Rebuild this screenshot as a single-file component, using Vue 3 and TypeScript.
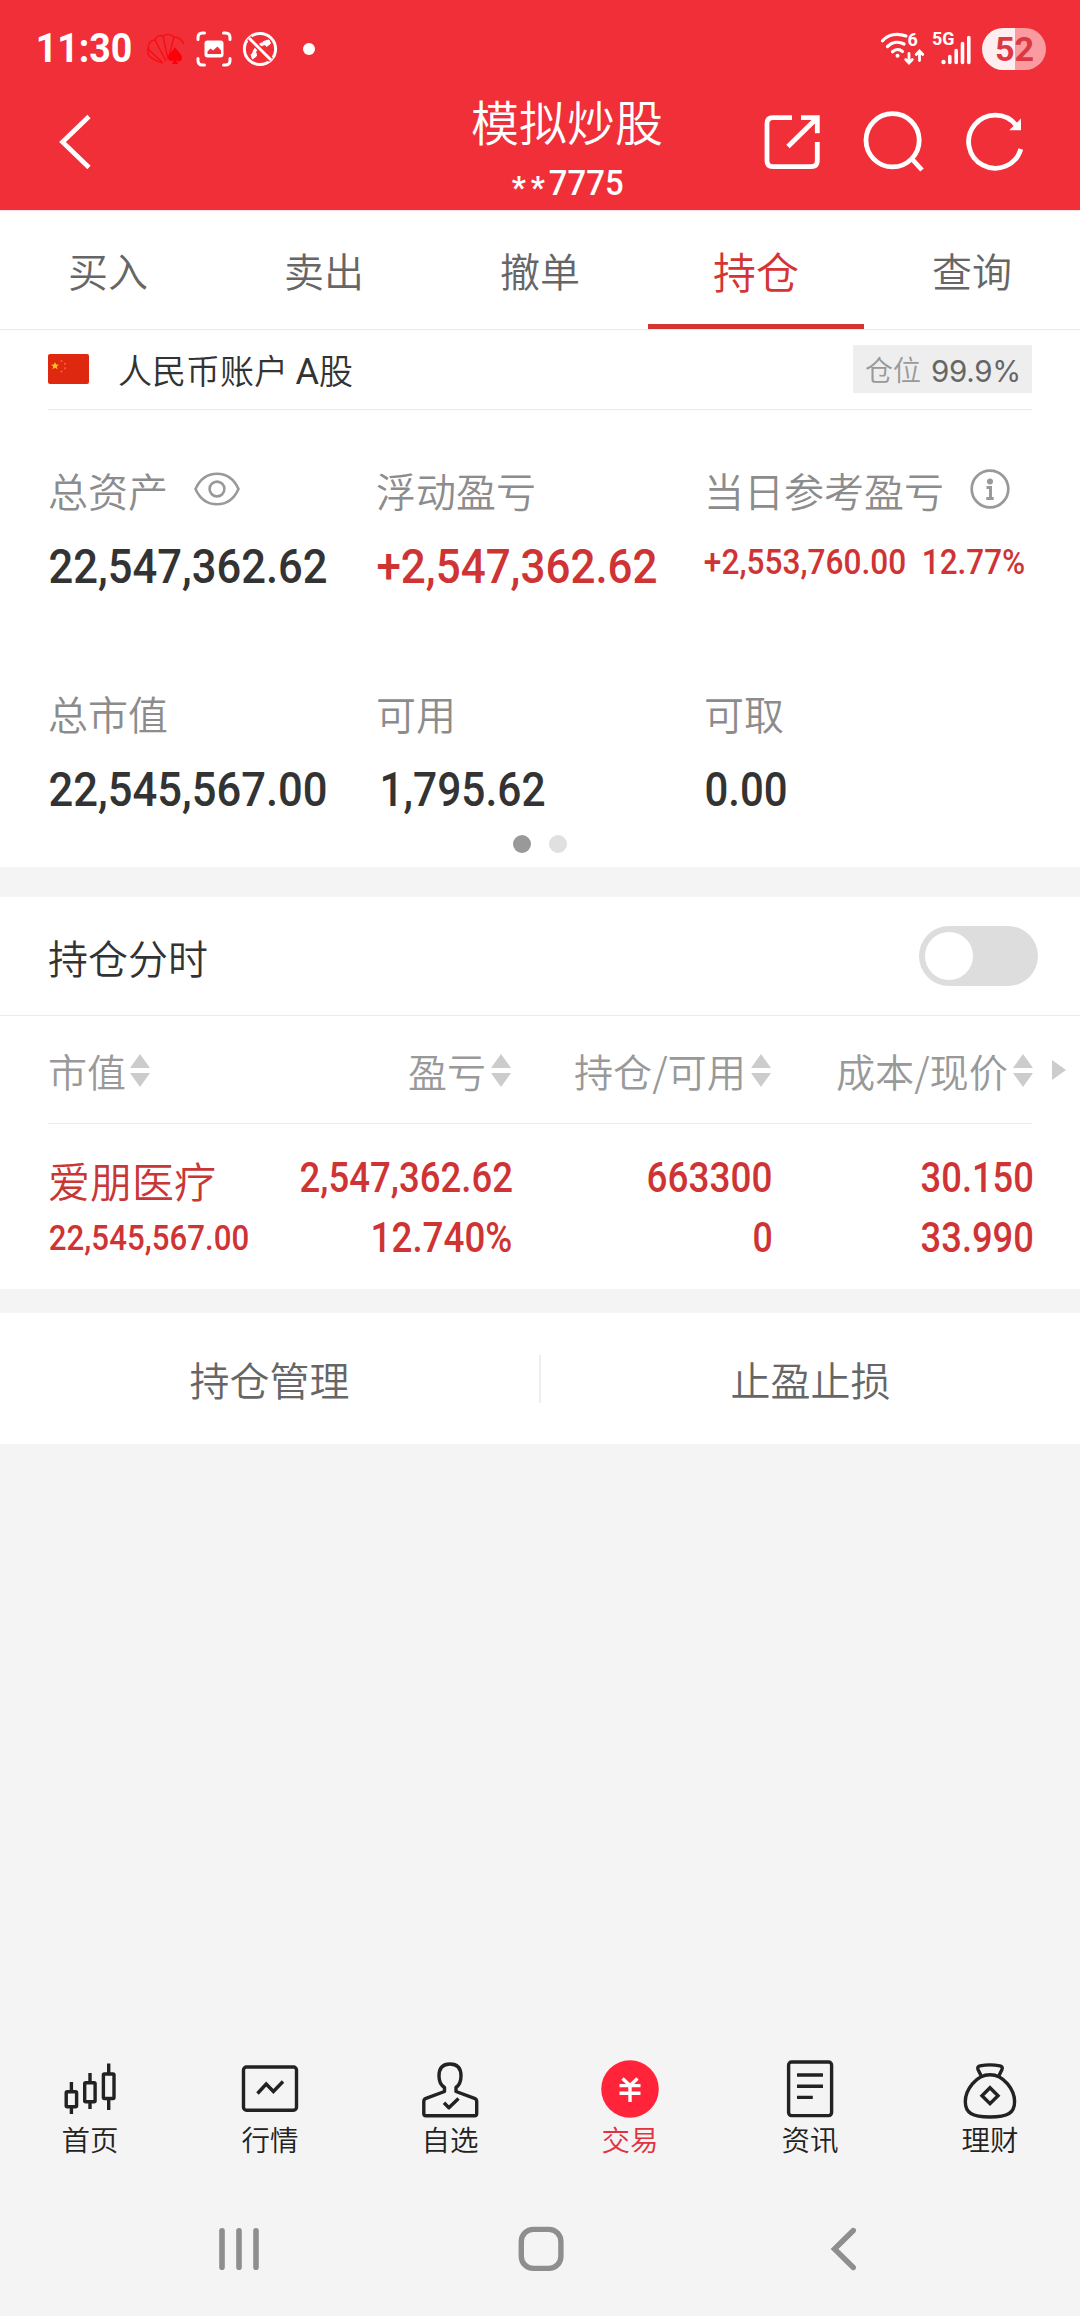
<script setup lang="ts">
import { h } from 'vue'

interface NumProps {
  text: string
  w: number
  cap: number
  weight?: number
  fill?: string
}

const RED = '#cf3435'
const DARK = '#333333'

/* Condensed figure text: set to a given width and digit height. */
const Num = (p: NumProps) => {
  const size = p.cap / 0.711
  const pad = size * 0.033
  return h(
    'svg',
    { width: p.w, height: p.cap, style: 'overflow:visible;display:block;flex:none' },
    [
      h(
        'text',
        {
          x: -pad,
          y: p.cap,
          'font-family': 'Roboto, "Liberation Sans", sans-serif',
          'font-size': size,
          'font-weight': p.weight ?? 500,
          fill: p.fill ?? DARK,
          textLength: p.w + pad * 2,
          lengthAdjust: 'spacingAndGlyphs',
        },
        p.text,
      ),
    ],
  )
}
Num.props = ['text', 'w', 'cap', 'weight', 'fill']

const tabs = ['买入', '卖出', '撤单', '持仓', '查询']
const activeTab = '持仓'

const columns = [
  { name: '市值', cls: 'c1' },
  { name: '盈亏', cls: 'c2' },
  { name: '持仓/可用', cls: 'c3' },
  { name: '成本/现价', cls: 'c4' },
]
</script>

<template>
  <div class="screen">
    <header class="top">
      <div class="status">
        <Num text="11:30" :w="94" :cap="28.7" :weight="700" fill="#fff" class="clock" />
        <svg class="fan" width="40" height="34" viewBox="146 33 40 34" fill="none" stroke="#fb0d12" stroke-width="1.500">
          <path d="M163 64C155 62 149 58 148 55L148 50L163 64M149 50C147 45 151 41 155 41L166 62M155 41C156 37 160 36 163 37L168 60M163 37C166 35 171 35 174 38L169 57M174 38C179 38 182 41 184 45" />
          <path d="M175 48C178 53 182 55 182 59C182 63 178 63 176 61L178 65H172L174 61C171 63 168 62 168 58C169 54 173 52 175 48Z" fill="#fb0008" stroke="none" />
        </svg>
        <svg class="shot" width="36" height="36" viewBox="0 0 36 36" fill="none" stroke="#fff" stroke-width="3" stroke-linecap="round">
          <path d="M2 8.500V6.500Q2 2 6.500 2H8.500M27.500 2H29.500Q34 2 34 6.500V8.500M34 27.500V29.500Q34 34 29.500 34H27.500M8.500 34H6.500Q2 34 2 29.500V27.500" />
          <rect x="8.500" y="9.500" width="19" height="17" rx="3" fill="#fff" stroke="none" />
          <path d="M11.500 23L11.500 20.500L14.500 17.500L17 19.500L21.500 15.500L25 19.500V23Z" fill="#f12f38" stroke="none" />
        </svg>
        <svg class="nocall" width="36" height="36" viewBox="-18 -18 36 36" fill="none" stroke="#fff">
          <circle r="15.600" stroke-width="3" />
          <path d="M-6.500 7C-6 0 -1 -5.500 8 -6" stroke-width="3.400" />
          <path d="M-9 5.500L-4 3.500L-3.500 7L-7.500 10ZM3.500 -7.500L9 -9L10.500 -5.500L6.500 -2.500Z" fill="#fff" stroke="#fff" stroke-width="1" stroke-linejoin="round" />
          <path d="M-11 -11L11 11" stroke="#f12f38" stroke-width="5.600" />
          <path d="M-11 -11L11 11" stroke-width="3" />
        </svg>
        <i class="notch"></i>
        <svg class="radio" width="96" height="40" viewBox="878 30 96 40" fill="none" stroke="#fff" stroke-width="3.200" stroke-linecap="round">
          <path d="M882.500 41.800C888 35.500 897 33.500 906 37M887.500 47.500C892 43 898.500 42 904 45M892.500 52.700C895.500 50 899.500 50 902.500 52.500" />
          <circle cx="897.500" cy="56.700" r="2" fill="#fff" stroke="none" />
          <path d="M909 54.500V63.500M905.700 60.500L909 64L912.300 60.500M919.500 61.500V52.500M916.200 55.500L919.500 52L922.800 55.500" stroke-width="2.800" />
          <text x="907.500" y="47.300" font-family="Roboto, sans-serif" font-size="18" font-weight="700" fill="#fff" stroke="none">6</text>
          <text x="932" y="45.700" font-family="Roboto, sans-serif" font-size="18" font-weight="700" fill="#fff" stroke="none" textLength="22.500" lengthAdjust="spacingAndGlyphs">5G</text>
          <circle cx="943.500" cy="63" r="2.200" fill="#fff" stroke="none" />
          <path d="M949.800 57.500V63.500M956.200 51.500V63.500M962.500 44.500V63.500M968.800 38.500V63.500" stroke-width="3.600" />
        </svg>
        <div class="battery">
          <Num text="52" :w="37" :cap="24" :weight="700" fill="#dc3844" />
        </div>
      </div>
      <div class="bar">
        <svg class="back" width="40" height="64" viewBox="55 110 40 64" fill="none" stroke="#fff" stroke-width="4.600">
          <path d="M89 116.500L62.500 142L89 167.500" />
        </svg>
        <div class="title">
          <h1>模拟炒股</h1>
          <div class="acct-no"><span class="mask">**</span><Num text="7775" :w="72.500" :cap="25.500" fill="#fff" /></div>
        </div>
        <svg class="actions" width="270" height="66" viewBox="760 108 270 66" fill="none" stroke="#fff" stroke-width="4.800">
          <path d="M792 117.700H773Q767 117.700 767 123.700V160.700Q767 166.700 773 166.700H811.300Q817.300 166.700 817.300 160.700V142" />
          <path d="M801 117.700H817.300V133.300M788 146.500L816 119" />
          <circle cx="892.600" cy="140.300" r="26.600" />
          <path d="M911.500 158.500L922 170" />
          <path d="M1020.800 149A26.600 26.600 0 1 1 1016 125" />
          <path d="M1021 118.500V130.200H1009.200Z" fill="#fff" stroke="none" />
        </svg>
      </div>
    </header>

    <nav class="tabs">
      <div v-for="t in tabs" :key="t" class="tab" :class="{ on: t === activeTab }">{{ t }}</div>
    </nav>

    <section class="account">
      <svg width="41" height="30" viewBox="0 0 41 30">
        <rect width="41" height="30" rx="2" fill="#de2910" />
        <path d="M7 8L8.100 10.600L10.900 10.800L8.800 12.600L9.500 15.300L7 13.800L4.500 15.300L5.200 12.600L3.100 10.800L5.900 10.600Z" fill="#ffc21a" />
        <g fill="#f0642a">
          <circle cx="13.500" cy="7" r="1.100" /><circle cx="17" cy="9.800" r="1.100" />
          <circle cx="17" cy="14.300" r="1.100" /><circle cx="13.500" cy="17.500" r="1.100" />
        </g>
      </svg>
      <span class="acct-name">人民币账户 <b>A</b>股</span>
      <div class="pos"><span>仓位</span><span class="pct">99.9%</span></div>
    </section>

    <section class="stats">
      <div class="grid">
        <div>
          <div class="label">总资产
            <svg class="eye" width="46" height="34" viewBox="-23 -17 46 34" fill="none" stroke="#999" stroke-width="2.600">
              <path d="M-21.500 0C-17 -10 -9 -15.300 0 -15.300S17 -10 21.500 0C17 10 9 15.300 0 15.300S-17 10 -21.500 0Z" />
              <circle r="7.400" />
            </svg>
          </div>
          <Num text="22,547,362.62" :w="276" :cap="34" class="v" />
        </div>
        <div>
          <div class="label">浮动盈亏</div>
          <Num text="+2,547,362.62" :w="278" :cap="34" :fill="RED" class="v" />
        </div>
        <div>
          <div class="label">当日参考盈亏
            <svg class="info" width="40" height="40" viewBox="-20 -20 40 40" fill="none" stroke="#999" stroke-width="2.700">
              <circle r="18.300" />
              <circle cy="-7.600" r="3" fill="#999" stroke="none" />
              <path d="M-3.500 -1.500H0.500V9M-3.700 9.500H3.700" stroke-width="3" />
            </svg>
          </div>
          <div class="pair">
            <Num text="+2,553,760.00" :w="200" :cap="25" :fill="RED" />
            <Num text="12.77%" :w="101" :cap="25" :fill="RED" />
          </div>
        </div>
        <div>
          <div class="label">总市值</div>
          <Num text="22,545,567.00" :w="276" :cap="34" class="v" />
        </div>
        <div>
          <div class="label">可用</div>
          <Num text="1,795.62" :w="163" :cap="34" class="v v1" />
        </div>
        <div>
          <div class="label">可取</div>
          <Num text="0.00" :w="80" :cap="34" class="v" />
        </div>
      </div>
      <div class="dots"><i></i><i></i></div>
    </section>

    <section class="card">
      <div class="switch-row">
        <span>持仓分时</span>
        <div class="switch"><i></i></div>
      </div>
      <div class="thead">
        <div v-for="c in columns" :key="c.name" :class="c.cls">
          <span>{{ c.name }}</span>
          <svg width="20" height="33" viewBox="0 0 20 33" fill="#ccc"><path d="M10 0L20 14H0ZM0 19H20L10 33Z" /></svg>
        </div>
        <svg class="more" width="14" height="20" viewBox="0 0 14 20" fill="#ccc"><path d="M0 0L14 10L0 20Z" /></svg>
      </div>
      <div class="holding">
        <div class="c1">
          <div class="stock">爱朋医疗</div>
          <Num text="22,545,567.00" :w="198" :cap="25" :fill="RED" />
        </div>
        <div class="c2 nums">
          <Num text="2,547,362.62" :w="210.500" :cap="30" :fill="RED" />
          <Num text="12.740%" :w="139" :cap="30" :fill="RED" />
        </div>
        <div class="c3 nums">
          <Num text="663300" :w="123" :cap="30" :fill="RED" />
          <Num text="0" :w="17.500" :cap="30" :fill="RED" />
        </div>
        <div class="c4 nums">
          <Num text="30.150" :w="110.500" :cap="30" :fill="RED" />
          <Num text="33.990" :w="110.500" :cap="30" :fill="RED" />
        </div>
      </div>
    </section>

    <section class="links">
      <div>持仓管理</div>
      <i></i>
      <div>止盈止损</div>
    </section>

    <nav class="bottom">
      <div>
        <svg width="64" height="64" viewBox="58 2057 64 64" fill="none" stroke="#222" stroke-width="3.400">
          <rect x="66.200" y="2091.700" width="10.400" height="15" rx="1" /><rect x="84.700" y="2082.700" width="10.400" height="19" rx="1" /><rect x="103.400" y="2074" width="10.600" height="24.500" rx="1" />
          <path d="M71.400 2082V2091M71.400 2107V2114M90 2073V2082M90 2102V2109M108.700 2063.500V2074M108.700 2099V2110" />
        </svg>
        <span>首页</span>
      </div>
      <div>
        <svg width="64" height="64" viewBox="238 2057 64 64" fill="none" stroke="#222" stroke-width="3.400">
          <rect x="243.500" y="2067" width="53" height="43.300" rx="3" />
          <path d="M257.500 2093.500L266.200 2084L273.400 2091.500L283 2081.500" />
        </svg>
        <span>行情</span>
      </div>
      <div>
        <svg width="64" height="64" viewBox="418 2057 64 64" fill="none" stroke="#222" stroke-width="3.400" stroke-linejoin="round">
          <path d="M444.500 2091.500V2087.500C440.500 2085 439 2081 439 2076C439 2068 443 2064 450 2064S461 2068 461 2076C461 2081 459.500 2085 456 2087.500V2091.500L474.500 2098.300Q476.700 2099.200 476.700 2101.500V2113.500Q476.700 2115.700 474.500 2115.700H426Q423.800 2115.700 423.800 2113.500V2101.500Q423.800 2099.200 426 2098.300Z" />
          <path d="M444 2102.700L448.900 2107.700L458.500 2098.500" />
        </svg>
        <span>自选</span>
      </div>
      <div class="on">
        <svg width="64" height="64" viewBox="598 2057 64 64" fill="none" stroke="#fff" stroke-width="3.400">
          <circle cx="630" cy="2089" r="28.800" fill="#ff2439" stroke="none" />
          <path d="M622.500 2078.500L630 2085.500L637.500 2078.500M619.500 2085.600H640.500M619.500 2093.200H640.500M630 2085V2102" />
        </svg>
        <span>交易</span>
      </div>
      <div>
        <svg width="64" height="64" viewBox="778 2057 64 64" fill="none" stroke="#222" stroke-width="3.400">
          <rect x="788.600" y="2062" width="43" height="53.600" rx="3" />
          <path d="M797 2075H823M797 2086.300H823M797 2097.400H812.800" />
        </svg>
        <span>资讯</span>
      </div>
      <div>
        <svg width="64" height="64" viewBox="958 2057 64 64" fill="none" stroke="#222" stroke-width="3.400" stroke-linejoin="round">
          <path d="M990 2074.700C976 2074.700 965.300 2090 965.300 2101.500C965.300 2113 972 2117 990 2117S1014.600 2113 1014.600 2101.500C1014.600 2090 1004 2074.700 990 2074.700Z" />
          <path d="M981 2075.500L978 2069.500Q977 2066.500 980 2065.800Q990 2064 1000 2065.800Q1003 2066.500 1002 2069.500L999 2075.500" />
          <path d="M990 2087.700L998 2095.700L990 2103.700L982 2095.700Z" stroke-linejoin="miter" />
        </svg>
        <span>理财</span>
      </div>
    </nav>

    <div class="sysnav">
      <svg width="46" height="46" viewBox="216 2226 46 46" stroke="#8e8e8e" stroke-width="5.600" stroke-linecap="round"><path d="M222 2230.700V2267.300M239 2230.700V2267.300M256 2230.700V2267.300" /></svg>
      <svg width="46" height="46" viewBox="518 2226 46 46" fill="none" stroke="#8e8e8e" stroke-width="5.400"><rect x="521.300" y="2229.400" width="39.600" height="39" rx="12" /></svg>
      <svg width="46" height="46" viewBox="820 2226 46 46" fill="none" stroke="#8e8e8e" stroke-width="5.400" stroke-linecap="round"><path d="M853.300 2230.500L834.500 2249L853.300 2267.500" /></svg>
    </div>
  </div>
</template>

<style>
body {
  margin: 0;
  background: #f4f4f4;
}
</style>

<style scoped>
.screen {
  width: 1080px;
  height: 2316px;
  display: flex;
  flex-direction: column;
  background: #f4f4f4;
  font-family: 'Noto Sans CJK SC', sans-serif;
  font-weight: 350;
  font-size: 40px;
  color: #333;
  overflow: hidden;
}
.screen svg {
  flex: none;
  display: block;
}
.top {
  height: 210px;
  background: #f12f38;
  color: #fff;
  border-bottom: 1px solid #ffe3e6;
}
.status {
  height: 97px;
  display: flex;
  align-items: center;
  padding: 0 34px 0 37px;
  box-sizing: border-box;
}
.clock {
  margin-top: -2px;
}
.fan {
  margin-left: 15px;
}
.shot {
  margin-left: 10px;
}
.nocall {
  margin-left: 10px;
}
.notch {
  width: 12px;
  height: 12px;
  border-radius: 50%;
  background: #fff;
  margin-left: 25px;
}
.radio {
  margin-left: auto;
}
.battery {
  width: 64px;
  height: 42px;
  margin-left: 8px;
  border-radius: 21px;
  background: linear-gradient(90deg, #feeef0 33px, #f99b9f 33px);
  display: flex;
  align-items: center;
  justify-content: center;
}
.bar {
  height: 113px;
  display: flex;
  align-items: flex-start;
}
.back {
  margin: 13px 0 0 55px;
}
.title {
  width: 200px;
  margin-left: 372px;
  display: flex;
  flex-direction: column;
  align-items: center;
}
.title h1 {
  margin: -5px 0 13px;
  font-size: 48px;
  font-weight: inherit;
  line-height: 56px;
  white-space: nowrap;
}
.acct-no {
  display: flex;
  align-items: center;
  height: 42px;
  gap: 0;
}
.mask {
  font-family: Roboto, 'Liberation Sans', sans-serif;
  font-size: 31px;
  font-weight: 700;
  line-height: 40px;
  letter-spacing: 5px;
  padding-top: 11px;
}
.actions {
  margin: 11px 0 0 93px;
}
.tabs {
  height: 118px;
  display: flex;
  background: #fff;
  border-bottom: 1px solid #ebebeb;
}
.tab {
  flex: 1;
  box-sizing: border-box;
  height: 118px;
  line-height: 118px;
  text-align: center;
  color: #666;
}
.tab.on {
  font-size: 43px;
  color: #d43434;
  border-bottom: 5px solid #d43434;
}
.account {
  height: 80px;
  display: flex;
  align-items: center;
  background: #fff;
  padding: 0 48px 2px;
  position: relative;
  box-sizing: border-box;
}
.account::after,
.thead::after {
  content: '';
  position: absolute;
  left: 48px;
  right: 48px;
  bottom: 0;
  height: 1px;
  background: #ebebeb;
}
.acct-name {
  font-size: 34px;
  margin-left: 29px;
}
.acct-name b {
  font-weight: 400;
  font-family: Roboto, sans-serif;
  font-size: 36px;
}
.pos {
  margin-left: auto;
  width: 179px;
  height: 48px;
  box-sizing: border-box;
  padding: 0 11px 0 12px;
  display: flex;
  align-items: center;
  justify-content: space-between;
  background: #eee;
  font-size: 28px;
  line-height: 44px;
  color: #999;
  white-space: nowrap;
}
.pct {
  font-family: Inter, Roboto, sans-serif;
  font-weight: 400;
  font-size: 29.500px;
  letter-spacing: -0.300px;
  color: #666;
  padding-top: 3px;
}
.stats {
  background: #fff;
  height: 457px;
  box-sizing: border-box;
  padding: 56px 48px 0;
}
.grid {
  display: grid;
  grid-template-columns: repeat(3, 328px);
  grid-template-rows: 223px 146px;
}
.label {
  display: flex;
  align-items: center;
  height: 48px;
  line-height: 48px;
  color: #8c8c8c;
  margin-bottom: 35px;
  white-space: nowrap;
}
.eye {
  margin: -3px 0 0 26px;
}
.info {
  margin: -3px 0 0 26px;
}
.v {
  margin-left: 2px;
}
.v1 {
  margin-left: 5px;
}
.pair {
  display: flex;
  gap: 18px;
  margin-left: 1px;
}
.dots {
  display: flex;
  justify-content: center;
  gap: 18px;
}
.dots i {
  width: 18px;
  height: 18px;
  border-radius: 50%;
  background: #999;
}
.dots i + i {
  background: #e0e0e0;
}
.card {
  margin-top: 30px;
  height: 392px;
  background: #fff;
}
.switch-row {
  height: 118px;
  border-bottom: 1px solid #ebebeb;
  padding: 0 42px 0 48px;
  display: flex;
  align-items: center;
  justify-content: space-between;
}
.switch-row span {
  padding-top: 2px;
}
.switch {
  width: 119px;
  height: 60px;
  border-radius: 30px;
  background: #ddd;
  display: flex;
  align-items: center;
}
.switch i {
  width: 48px;
  height: 48px;
  margin-left: 6px;
  border-radius: 50%;
  background: #fff;
}
.thead {
  position: relative;
  height: 108px;
  display: flex;
  align-items: center;
  padding-left: 48px;
  font-size: 39px;
  color: #999;
}
.thead > div {
  display: flex;
  align-items: center;
  justify-content: flex-end;
  gap: 5px;
  white-space: nowrap;
}
.thead > .c1 {
  justify-content: flex-start;
  gap: 4px;
}
.thead > .c3,
.thead > .c4 {
  font-size: 39.200px;
}
.thead > .c4 svg {
  margin-right: -1px;
}
.more {
  margin-left: 20px;
}
.c1 {
  width: 202px;
}
.c2 {
  width: 261px;
}
.c3 {
  width: 260px;
}
.c4 {
  width: 261px;
}
.holding {
  display: flex;
  padding-left: 48px;
  color: #c93636;
}
.stock {
  font-size: 42px;
  line-height: 50px;
  margin: 31px 0 20px;
}
.stock + svg {
  margin-left: 2px;
}
.nums {
  display: flex;
  flex-direction: column;
  align-items: flex-end;
  gap: 30px;
  padding-top: 38px;
}
.links {
  margin-top: 24px;
  height: 131px;
  background: #fff;
  display: flex;
  align-items: center;
  color: #666;
}
.links div {
  flex: 1;
  text-align: center;
}
.links i {
  width: 2px;
  height: 48px;
  background: #eee;
}
.bottom {
  margin-top: auto;
  display: flex;
  height: 107px;
}
.bottom div {
  width: 180px;
  display: flex;
  flex-direction: column;
  align-items: center;
  font-size: 28.500px;
  line-height: 36px;
  color: #222;
}
.bottom .on {
  color: #e0323f;
}
.sysnav {
  height: 90px;
  margin-top: 62px;
  display: flex;
  padding-left: 216px;
  gap: 256px;
}
</style>
